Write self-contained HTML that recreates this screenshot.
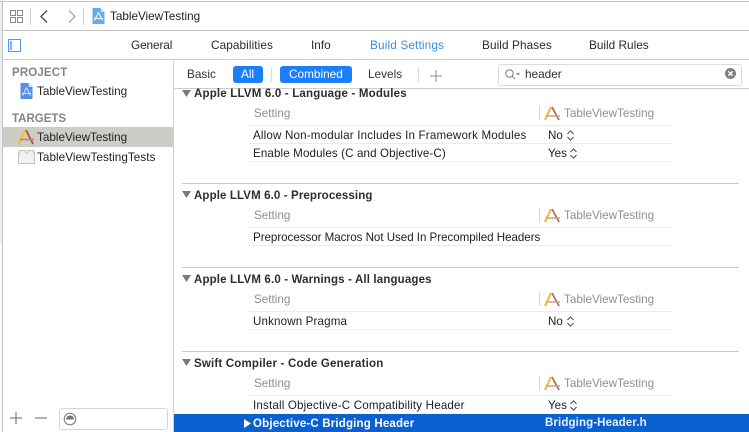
<!DOCTYPE html>
<html><head><meta charset="utf-8">
<style>
html,body{margin:0;padding:0;background:#fff}
#p{position:relative;width:749px;height:432px;overflow:hidden;background:#fff;font-family:"Liberation Sans",sans-serif;font-size:12px;color:#222}
#p div,#p span.a{position:absolute}
.t{position:absolute;white-space:nowrap;line-height:14px;height:14px;filter:blur(.3px)}
.l{position:absolute;background:#c8c8c8;height:1px}
.v{position:absolute;background:#cfcfcf;width:1px}
.h{font-weight:bold;color:#2e2e2e;font-size:11.5px}
.g{color:#8f8f8f;font-size:11.7px}
.r{color:#1d1d1d;font-size:11.6px}
.tab{font-size:11.8px;color:#2a2a2a}
svg{position:absolute;overflow:visible}
</style></head><body><div id="p">

<!-- window frame -->
<div style="left:0;top:0;width:3px;height:243px;background:#ececec"></div>
<div style="left:0;top:243px;width:3px;height:189px;background:#fafafa"></div>
<div style="left:2px;top:1px;width:1px;height:431px;background:#c6c6c6"></div>
<div class="l" style="left:0;top:1px;width:749px;background:#c4c4c4"></div>
<div class="l" style="left:3px;top:30px;width:746px;background:#c4c4c4"></div>
<div class="l" style="left:3px;top:59px;width:746px;background:#cdcdcd"></div>
<div class="l" style="left:174px;top:88px;width:575px;background:#cdcdcd"></div>
<div class="v" style="left:173px;top:60px;height:372px;background:#d2d2d2"></div>

<!-- toolbar -->
<svg style="left:10px;top:10px" width="13" height="13" fill="none" stroke="#888" stroke-width="1"><rect x=".5" y=".5" width="5" height="5"/><rect x="7.5" y=".5" width="5" height="5"/><rect x=".5" y="7.5" width="5" height="5"/><rect x="7.5" y="7.5" width="5" height="5"/></svg>
<div class="v" style="left:30px;top:8px;height:17px"></div>
<svg style="left:40px;top:10px" width="8" height="13" fill="none" stroke="#444" stroke-width="1.3"><path d="M7 .5 1 6.5 7 12.5"/></svg>
<svg style="left:68px;top:10px" width="8" height="13" fill="none" stroke="#aaa" stroke-width="1.3"><path d="M1 .5 7 6.5 1 12.5"/></svg>
<div class="v" style="left:83px;top:8px;height:17px"></div>
<svg style="left:92px;top:8px" width="13" height="16"><path d="M.5 0H8.5L12.5 4V16H.5Z" fill="#62ade9"/><path d="M8.5 0 12.5 4H8.5Z" fill="#bcdcf5"/><path d="M6.5 4.5 2.5 12.5M6.5 4.5 10.5 12.5M2 10.5H11" stroke="#e4f1fb" stroke-width="1.2" fill="none"/></svg>
<div class="t" style="left:110px;top:10px;font-size:11.7px;color:#222">TableViewTesting</div>

<!-- tab bar -->
<svg style="left:8px;top:39px" width="13" height="13" fill="none"><rect x=".5" y=".5" width="12" height="12" stroke="#4b9bf0" stroke-width="1"/><path d="M3 2V11" stroke="#1a7ff5" stroke-width="1.2"/></svg>
<div class="t tab" style="left:131px;top:38px;letter-spacing:-.1px">General</div>
<div class="t tab" style="left:211px;top:38px;letter-spacing:.08px">Capabilities</div>
<div class="t tab" style="left:311px;top:38px">Info</div>
<div class="t tab" style="left:370px;top:38px;color:#3a8fe3;letter-spacing:.14px">Build Settings</div>
<div class="t tab" style="left:482px;top:38px;letter-spacing:.08px">Build Phases</div>
<div class="t tab" style="left:589px;top:38px">Build Rules</div>

<!-- sidebar -->
<div class="t" style="left:12px;top:66px;font-weight:bold;font-size:11.5px;letter-spacing:.15px;color:#858585">PROJECT</div>
<svg style="left:20px;top:83px" width="13" height="16"><path d="M.5 0H8.5L12.5 4V16H.5Z" fill="#558fe6"/><path d="M8.5 0 12.5 4H8.5Z" fill="#c2d8f5"/><path d="M6.5 4.5 2.5 12.5M6.5 4.5 10.5 12.5M2 10.5H11" stroke="#cfe2fa" stroke-width="1.1" fill="none"/></svg>
<div class="t" style="left:37px;top:85px;font-size:11.7px">TableViewTesting</div>
<div class="t" style="left:12px;top:112px;font-weight:bold;font-size:11.5px;color:#858585">TARGETS</div>
<div style="left:3px;top:127px;width:170px;height:20px;background:#cdcdc6"></div>
<svg style="left:18px;top:129px" width="17" height="16" fill="none"><path d="M7 1 1 15" stroke="#f0c13a" stroke-width="2.6"/><path d="M8 1 15 15" stroke="#a8503c" stroke-width="1.8"/><path d="M2 10.5H16" stroke="#bb8a6a" stroke-width="1.6"/></svg>
<div class="t" style="left:37px;top:131px;font-size:11.7px">TableViewTesting</div>
<svg style="left:18px;top:150px" width="17" height="14"><path d="M.5 3H1.5V.5H7.5V3H10V.5H15.5V3H16.5V13.5H.5Z" fill="#f2f2f2" stroke="#c2c2c2"/></svg>
<div class="t" style="left:37px;top:151px;font-size:11.7px;letter-spacing:.05px">TableViewTestingTests</div>

<!-- sidebar footer -->
<svg style="left:10px;top:412px" width="12" height="12" stroke="#666" stroke-width="1"><path d="M6 0V12M0 6H12" fill="none"/></svg>
<svg style="left:35px;top:412px" width="12" height="12" stroke="#666" stroke-width="1"><path d="M0 6H12" fill="none"/></svg>
<div style="left:59px;top:408px;width:107px;height:20px;border:1px solid #d6d6d6;border-radius:3px;background:#fff"></div>
<svg style="left:63px;top:412px" width="14" height="14"><circle cx="7" cy="7" r="5.8" fill="none" stroke="#777" stroke-width="1"/><path d="M3 7.5A4 4 0 0 1 11 7.5Z" fill="#777"/></svg>

<!-- filter bar -->
<div class="t tab" style="left:187px;top:67px;color:#333">Basic</div>
<div style="left:233px;top:66px;width:30px;height:17px;background:#1c7ef8;border-radius:3px"></div>
<div class="t" style="left:241px;top:67px;color:#fff;font-size:11.8px">All</div>
<div class="v" style="left:271px;top:67px;height:15px;background:#ddd"></div>
<div style="left:280px;top:66px;width:72px;height:17px;background:#1c7ef8;border-radius:3px"></div>
<div class="t" style="left:289px;top:67px;color:#fff;font-size:11.8px">Combined</div>
<div class="t tab" style="left:368px;top:67px;color:#333">Levels</div>
<div class="v" style="left:418px;top:67px;height:15px;background:#ddd"></div>
<svg style="left:430px;top:70px" width="12" height="12" stroke="#888" stroke-width="1"><path d="M6 0V12M0 6H12" fill="none"/></svg>
<div style="left:498px;top:64px;width:242px;height:20px;border:1px solid #dcdcdc;border-radius:3px;background:#fff"></div>
<svg style="left:505px;top:69px" width="15" height="11" fill="none" stroke="#777" stroke-width="1"><circle cx="4.5" cy="4.5" r="3.7"/><path d="M7.2 7.2 10 10"/><path d="M11.5 4 13 5.5 14.5 4"/></svg>
<div class="t" style="left:525px;top:67px;font-size:11.8px;color:#333">header</div>
<svg style="left:725px;top:68px" width="11" height="11"><circle cx="5.5" cy="5.5" r="5.5" fill="#808080"/><path d="M3.4 3.4 7.6 7.6M7.6 3.4 3.4 7.6" stroke="#fff" stroke-width="1.4"/></svg>

<!-- section 1 -->
<svg style="left:182px;top:90px" width="9" height="7"><path d="M0 0H9L4.5 7Z" fill="#7a7a7a"/></svg>
<div class="t h" style="left:194px;top:87px;letter-spacing:.19px">Apple LLVM 6.0 - Language - Modules</div>
<div class="t g" style="left:254px;top:107px">Setting</div>
<div class="v" style="left:539px;top:106px;height:14px;background:#d8d8d8"></div>
<svg style="left:544px;top:106px" width="17" height="15" fill="none"><path d="M7 1 1 14" stroke="#efc44a" stroke-width="2.4"/><path d="M8 1 15 14" stroke="#b0604c" stroke-width="1.6"/><path d="M2 10H16" stroke="#c8a488" stroke-width="1.5"/></svg>
<div class="t g" style="left:564px;top:107px">TableViewTesting</div>
<div class="l" style="left:249px;top:125px;width:423px;background:#ececec"></div>
<div class="t r" style="left:253px;top:129px;letter-spacing:.17px">Allow Non-modular Includes In Framework Modules</div>
<div class="t r" style="left:548px;top:129px">No</div>
<svg style="left:567px;top:130px" width="7" height="11" fill="none" stroke="#444" stroke-width="1"><path d="M.5 4 3.5 .8 6.5 4M.5 7 3.5 10.2 6.5 7"/></svg>
<div class="l" style="left:249px;top:143px;width:423px;background:#ececec"></div>
<div class="t r" style="left:253px;top:147px;letter-spacing:.12px">Enable Modules (C and Objective-C)</div>
<div class="t r" style="left:548px;top:147px">Yes</div>
<svg style="left:570px;top:148px" width="7" height="11" fill="none" stroke="#444" stroke-width="1"><path d="M.5 4 3.5 .8 6.5 4M.5 7 3.5 10.2 6.5 7"/></svg>
<div class="l" style="left:249px;top:161px;width:423px;background:#ececec"></div>

<!-- section 2 -->
<div class="l" style="left:182px;top:183px;width:557px"></div>
<svg style="left:182px;top:191px" width="9" height="7"><path d="M0 0H9L4.5 7Z" fill="#7a7a7a"/></svg>
<div class="t h" style="left:194px;top:189px;letter-spacing:.12px">Apple LLVM 6.0 - Preprocessing</div>
<div class="t g" style="left:254px;top:209px">Setting</div>
<div class="v" style="left:539px;top:208px;height:14px;background:#d8d8d8"></div>
<svg style="left:544px;top:208px" width="17" height="15" fill="none"><path d="M7 1 1 14" stroke="#efc44a" stroke-width="2.4"/><path d="M8 1 15 14" stroke="#b0604c" stroke-width="1.6"/><path d="M2 10H16" stroke="#c8a488" stroke-width="1.5"/></svg>
<div class="t g" style="left:564px;top:209px">TableViewTesting</div>
<div class="l" style="left:249px;top:227px;width:423px;background:#ececec"></div>
<div class="t r" style="left:253px;top:231px;letter-spacing:-.04px">Preprocessor Macros Not Used In Precompiled Headers</div>
<div class="l" style="left:249px;top:245px;width:423px;background:#ececec"></div>

<!-- section 3 -->
<div class="l" style="left:182px;top:267px;width:557px"></div>
<svg style="left:182px;top:275px" width="9" height="7"><path d="M0 0H9L4.5 7Z" fill="#7a7a7a"/></svg>
<div class="t h" style="left:194px;top:273px;letter-spacing:.15px">Apple LLVM 6.0 - Warnings - All languages</div>
<div class="t g" style="left:254px;top:293px">Setting</div>
<div class="v" style="left:539px;top:292px;height:14px;background:#d8d8d8"></div>
<svg style="left:544px;top:292px" width="17" height="15" fill="none"><path d="M7 1 1 14" stroke="#efc44a" stroke-width="2.4"/><path d="M8 1 15 14" stroke="#b0604c" stroke-width="1.6"/><path d="M2 10H16" stroke="#c8a488" stroke-width="1.5"/></svg>
<div class="t g" style="left:564px;top:293px">TableViewTesting</div>
<div class="l" style="left:249px;top:311px;width:423px;background:#ececec"></div>
<div class="t r" style="left:253px;top:315px;letter-spacing:.14px">Unknown Pragma</div>
<div class="t r" style="left:548px;top:315px">No</div>
<svg style="left:567px;top:316px" width="7" height="11" fill="none" stroke="#444" stroke-width="1"><path d="M.5 4 3.5 .8 6.5 4M.5 7 3.5 10.2 6.5 7"/></svg>
<div class="l" style="left:249px;top:329px;width:423px;background:#ececec"></div>

<!-- section 4 -->
<div class="l" style="left:182px;top:351px;width:557px"></div>
<svg style="left:182px;top:359px" width="9" height="7"><path d="M0 0H9L4.5 7Z" fill="#7a7a7a"/></svg>
<div class="t h" style="left:194px;top:357px;letter-spacing:.19px">Swift Compiler - Code Generation</div>
<div class="t g" style="left:254px;top:377px">Setting</div>
<div class="v" style="left:539px;top:376px;height:14px;background:#d8d8d8"></div>
<svg style="left:544px;top:376px" width="17" height="15" fill="none"><path d="M7 1 1 14" stroke="#efc44a" stroke-width="2.4"/><path d="M8 1 15 14" stroke="#b0604c" stroke-width="1.6"/><path d="M2 10H16" stroke="#c8a488" stroke-width="1.5"/></svg>
<div class="t g" style="left:564px;top:377px">TableViewTesting</div>
<div class="l" style="left:249px;top:395px;width:423px;background:#ececec"></div>
<div class="t r" style="left:253px;top:399px;letter-spacing:.17px">Install Objective-C Compatibility Header</div>
<div class="t r" style="left:548px;top:399px">Yes</div>
<svg style="left:570px;top:400px" width="7" height="11" fill="none" stroke="#444" stroke-width="1"><path d="M.5 4 3.5 .8 6.5 4M.5 7 3.5 10.2 6.5 7"/></svg>

<!-- selected row -->
<div style="left:174px;top:414px;width:575px;height:18px;background:#0b60cf"></div>
<svg style="left:244px;top:419px" width="7" height="9"><path d="M0 0 7 4.5 0 9Z" fill="#fff"/></svg>
<div class="t" style="left:253px;top:417px;color:#fff;font-weight:bold;font-size:11.5px;letter-spacing:.18px">Objective-C Bridging Header</div>
<div class="t" style="left:545px;top:416px;color:#e6effa;font-weight:bold;font-size:11.5px;letter-spacing:.12px">Bridging-Header.h</div>

</div></body></html>
